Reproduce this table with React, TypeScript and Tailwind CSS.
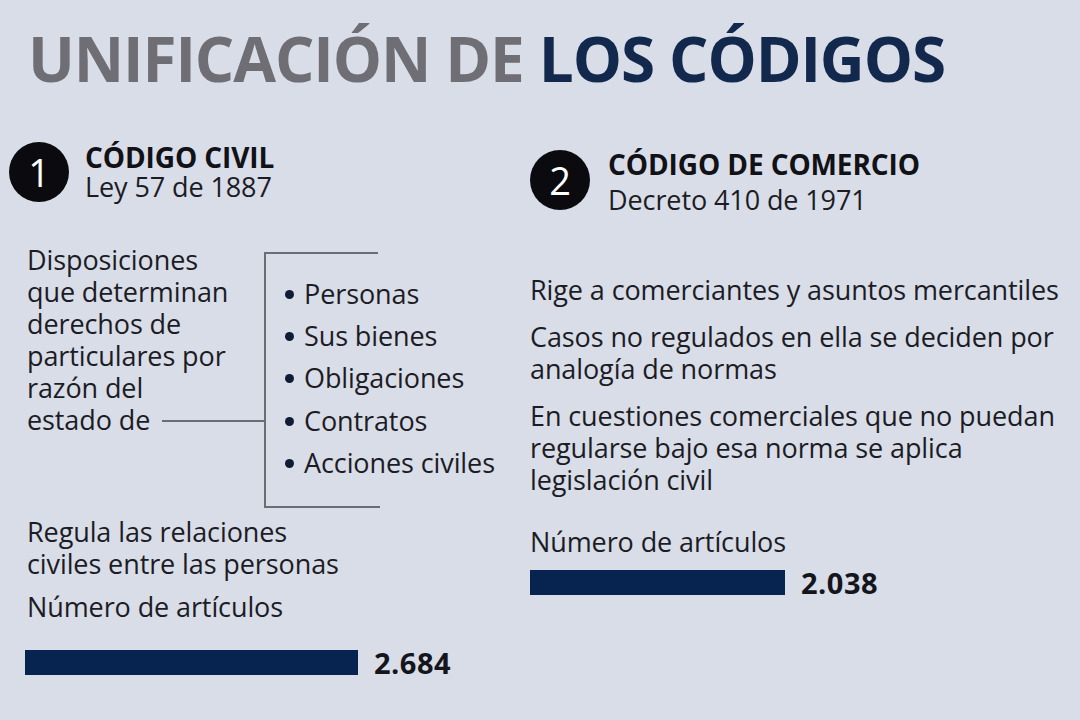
const leftLines = [
  "Disposiciones",
  "que determinan",
  "derechos de",
  "particulares por",
  "razón del",
];

const items = ["Personas", "Sus bienes", "Obligaciones", "Contratos", "Acciones civiles"];

function Badge({ n }: { n: string }) {
  return (
    <div className="w-[60px] h-[60px] shrink-0 rounded-full bg-[#0b0b0f] text-white flex items-center justify-center text-[38px] leading-none">
      {n}
    </div>
  );
}

function Bar({ width, value }: { width: string; value: string }) {
  return (
    <div className="flex items-center gap-[16px]">
      <div className={`${width} h-[25px] bg-[#06244f]`} />
      <span className="text-[29px] font-bold leading-none tracking-[0.5px] text-[#15151c]">{value}</span>
    </div>
  );
}

export default function App() {
  return (
    <div className="w-[1080px] h-[720px] overflow-hidden bg-[#d8dde8] text-[#1c1c24] font-['Open_Sans',sans-serif] tracking-[-0.1px]">
      <h1 className="pl-[28px] pt-[27px] text-[62px] font-bold leading-none tracking-[-1.1px] whitespace-nowrap">
        <span className="text-[#6e6e74]">UNIFICACIÓN DE </span>
        <span className="text-[#12284c]">LOS CÓDIGOS</span>
      </h1>

      <div className="flex">
        {/* left column */}
        <div className="w-[530px] shrink-0 pt-[53px] pl-[9px]">
          <div className="flex items-center gap-[16px]">
            <Badge n="1" />
            <div className="leading-[30px]">
              <div className="text-[28px] font-bold text-[#111116]">CÓDIGO CIVIL</div>
              <div className="text-[27px]">Ley 57 de 1887</div>
            </div>
          </div>

          <div className="flex mt-[42px] pl-[18px]">
            <div className="w-[237px] shrink-0 text-[27px] leading-[32px]">
              {leftLines.map((l) => (
                <div key={l}>{l}</div>
              ))}
              <div className="flex items-center">
                <span>estado de</span>
                <div className="flex-1 h-[2px] bg-[#6b6d74] ml-[12px] mt-[2px]" />
              </div>
            </div>
            <div className="mt-[8px] h-[256px] border-l-2 border-[#6b6d74] flex flex-col">
              <div className="w-[112px] h-[2px] bg-[#6b6d74]" />
              <ul className="pt-[19px] flex-1">
                {items.map((it) => (
                  <li key={it} className="h-[42.3px] flex items-center text-[27px] whitespace-nowrap">
                    <span className="w-[9px] h-[9px] rounded-full bg-[#0f1c36] ml-[19px] mr-[10px]" />
                    {it}
                  </li>
                ))}
              </ul>
              <div className="w-[114px] h-[2px] bg-[#6b6d74]" />
            </div>
          </div>

          <div className="pl-[18px] mt-[8px] text-[27px] leading-[32px]">
            <div>Regula las relaciones</div>
            <div>civiles entre las personas</div>
            <div className="mt-[11px]">Número de artículos</div>
          </div>
          <div className="pl-[16px] mt-[25px]">
            <Bar width="w-[333px]" value="2.684" />
          </div>
        </div>

        {/* right column */}
        <div className="flex-1 pt-[57px]">
          <div className="flex items-start gap-[18px]">
            <div className="mt-[4px]">
              <Badge n="2" />
            </div>
            <div className="leading-[36px]">
              <div className="text-[28px] font-bold text-[#111116]">CÓDIGO DE COMERCIO</div>
              <div className="text-[27px]">Decreto 410 de 1971</div>
            </div>
          </div>

          <div className="mt-[56px] text-[27px] leading-[32px] flex flex-col gap-[15px]">
            <div className="whitespace-nowrap">Rige a comerciantes y asuntos mercantiles</div>
            <div>
              <div className="whitespace-nowrap">Casos no regulados en ella se deciden por</div>
              <div>analogía de normas</div>
            </div>
            <div>
              <div className="whitespace-nowrap">En cuestiones comerciales que no puedan</div>
              <div>regularse bajo esa norma se aplica</div>
              <div>legislación civil</div>
            </div>
            <div className="mt-[15px]">Número de artículos</div>
          </div>
          <div className="mt-[10px]">
            <Bar width="w-[255px]" value="2.038" />
          </div>
        </div>
      </div>
    </div>
  );
}
